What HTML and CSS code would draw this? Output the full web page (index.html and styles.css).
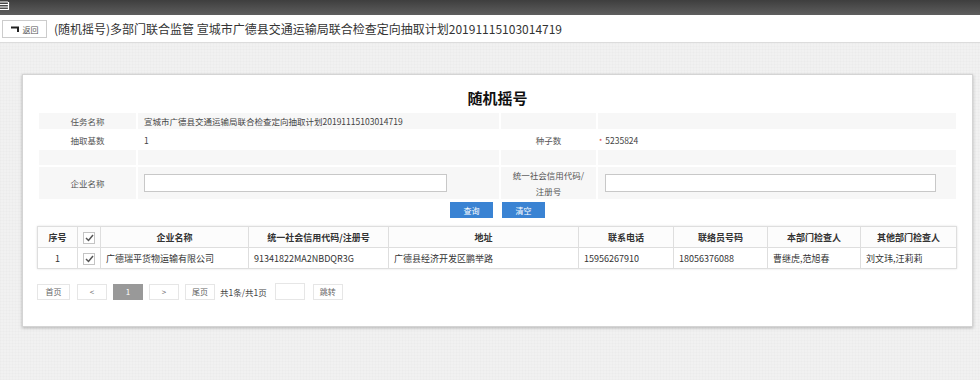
FILE: index.html
```html
<!DOCTYPE html>
<html lang="zh-CN">

<head>
  <meta charset="utf-8">
  <title>随机摇号</title>
  <link rel="stylesheet" href="styles.css">
</head>

<body>
  <div class="topbar">
    <svg class="app-icon" width="11" height="10" viewBox="0 0 11 10">
      <path d="M0 1 H8 M0 3.5 H9 M0 6 H9 M0 8.5 H9 M8.5 1 V9" stroke="#fff" stroke-width="1.2" fill="none"/>
    </svg>
  </div>

  <div class="page-head">
    <button class="back-btn">
      <svg width="9" height="6" viewBox="0 0 9 6">
        <path d="M0 1.5 H7 V6" stroke="#222" stroke-width="2" fill="none"/>
      </svg>
      返回
    </button>
    <span class="page-title">(随机摇号)多部门联合监管 宣城市广德县交通运输局联合检查定向抽取计划20191115103014719</span>
  </div>

  <div class="wrap">
    <div class="card">
      <h1>随机摇号</h1>

      <table class="form-table">
        <colgroup>
          <col style="width:97px">
          <col style="width:361px">
          <col style="width:95px">
          <col>
        </colgroup>
        <tr class="row-a">
          <td class="lbl">任务名称</td>
          <td class="val">宣城市广德县交通运输局联合检查定向抽取计划20191115103014719</td>
          <td></td>
          <td></td>
        </tr>
        <tr class="row-b">
          <td class="lbl">抽取基数</td>
          <td class="val">1</td>
          <td class="lbl">种子数</td>
          <td class="val"><span class="req">*</span>5235824</td>
        </tr>
        <tr class="row-c">
          <td></td>
          <td></td>
          <td></td>
          <td></td>
        </tr>
        <tr class="row-d">
          <td class="lbl">企业名称</td>
          <td class="val"><input type="text" class="txt txt-name"></td>
          <td class="lbl wrap-lbl">统一社会信用代码/注册号</td>
          <td class="val"><input type="text" class="txt txt-code"></td>
        </tr>
      </table>

      <div class="actions">
        <button class="btn-blue">查询</button>
        <button class="btn-blue">清空</button>
      </div>

      <table class="grid">
        <colgroup>
          <col style="width:40px">
          <col style="width:23px">
          <col style="width:148px">
          <col style="width:140px">
          <col style="width:190px">
          <col style="width:95px">
          <col style="width:94px">
          <col style="width:93px">
          <col>
        </colgroup>
        <thead>
          <tr>
            <th>序号</th>
            <th><span class="chk"><svg width="9" height="8" viewBox="0 0 9 8"><path d="M1 4 L3.5 6.5 L8 1" stroke="#555" stroke-width="1.5" fill="none"/></svg></span></th>
            <th>企业名称</th>
            <th>统一社会信用代码/注册号</th>
            <th>地址</th>
            <th>联系电话</th>
            <th>联络员号码</th>
            <th>本部门检查人</th>
            <th>其他部门检查人</th>
          </tr>
        </thead>
        <tbody>
          <tr>
            <td class="center">1</td>
            <td class="center"><span class="chk"><svg width="9" height="8" viewBox="0 0 9 8"><path d="M1 4 L3.5 6.5 L8 1" stroke="#555" stroke-width="1.5" fill="none"/></svg></span></td>
            <td>广德瑞平货物运输有限公司</td>
            <td>91341822MA2NBDQR3G</td>
            <td>广德县经济开发区鹏举路</td>
            <td>15956267910</td>
            <td>18056376088</td>
            <td>曹继虎,范旭春</td>
            <td>刘文玮,汪莉莉</td>
          </tr>
        </tbody>
      </table>

      <div class="pager">
        <span class="pg pg-wide">首页</span>
        <span class="pg">&lt;</span>
        <span class="pg active">1</span>
        <span class="pg">&gt;</span>
        <span class="pg">尾页</span>
        <span class="pg-info">共1条/共1页</span>
        <input type="text" class="pg-input">
        <span class="pg">跳转</span>
      </div>
    </div>
  </div>
</body>

</html>
```

FILE: styles.css
```css
body {
  margin: 0;
  font-family: "Noto Sans CJK SC", "Liberation Sans", sans-serif;
  background-color: #f1f1f1;
  background-image:
    repeating-linear-gradient(0deg, rgba(0,0,0,0.012) 0 1px, transparent 1px 3px),
    repeating-linear-gradient(90deg, rgba(0,0,0,0.012) 0 1px, transparent 1px 3px);
  color: #333;
  height: 380px;
  overflow: hidden;
}

/* dark strip on top */
.topbar {
  height: 15px;
  background: linear-gradient(#3e3e3e, #5e5e5e);
}

.app-icon {
  display: block;
  padding-top: 1px;
}

.page-head {
  height: 27px;
  background: #fff;
  border-bottom: 1px solid #dcdcdc;
  display: flex;
  align-items: center;
  padding-left: 2px;
}

.back-btn {
  height: 18px;
  width: 45px;
  border: 1px solid #ccc;
  background: #fff;
  font-family: inherit;
  font-size: 8px;
  color: #555;
  padding: 0;
  display: flex;
  align-items: center;
  justify-content: center;
  gap: 3px;
  margin-top: 1px;
}

.page-title {
  margin-left: 7px;
  font-size: 12px;
  color: #333;
}

.wrap {
  padding: 31px 7px 0 22px;
}

.card {
  background: #fff;
  border: 1px solid #d4d4d4;
  box-shadow: 0 1px 3px rgba(0,0,0,0.25);
  padding: 13px 14px 27px 14px;
  height: 211px;
}

h1 {
  margin: 0 0 5px 0;
  text-align: center;
  font-size: 15px;
  line-height: 20px;
  font-weight: bold;
  color: #111;
}

/* top form */
.form-table {
  width: 100%;
  table-layout: fixed;
  border-collapse: separate;
  border-spacing: 2px;
  margin: -2px 0 0 0;
  font-size: 8.5px;
  color: #444;
}

.form-table td {
  padding: 0;
}

.form-table .lbl {
  text-align: center;
  color: #555;
}

.form-table .val {
  padding-left: 6px;
}

.row-a td,
.row-c td,
.row-d td {
  background: #f7f7f7;
}

.row-a td { height: 16px; }
.row-b td { height: 17px; }
.row-c td { height: 15px; }
.row-d td { height: 32px; }

.wrap-lbl {
  padding: 0 8px !important;
  line-height: 16px;
}

.req {
  color: #d33;
  font-size: 7px;
  margin-right: 3px;
  margin-left: -5px;
}

.txt {
  height: 18px;
  box-sizing: border-box;
  border: 1px solid #c8c8c8;
  background: #fff;
  display: block;
}

.txt-name { width: 303px; }
.txt-code { width: 331px; margin-left: 1px; }

.actions {
  display: flex;
  justify-content: center;
  gap: 9px;
  margin-top: 1px;
}

.btn-blue {
  width: 43px;
  height: 16px;
  border: none;
  background: #3a83d3;
  color: #fff;
  font-family: inherit;
  font-size: 8px;
  padding: 0;
}

/* results grid */
.grid {
  width: 920px;
  table-layout: fixed;
  border-collapse: collapse;
  margin-top: 8px;
  font-size: 9px;
  box-shadow: 0 0 2px rgba(0,0,0,0.12);
}

.grid th,
.grid td {
  border: 1px solid #dedede;
  height: 20px;
  padding: 0 0 0 5px;
  white-space: nowrap;
  overflow: hidden;
}

.grid th {
  font-weight: bold;
  text-align: center;
  padding: 0;
  background: #fcfcfc;
  color: #333;
}

.grid td {
  color: #333;
}

.grid .center {
  text-align: center;
  padding: 0;
}

.chk {
  display: inline-flex;
  align-items: center;
  justify-content: center;
  width: 10px;
  height: 10px;
  border: 1px solid #c4c4c4;
  background: #fff;
  vertical-align: middle;
}

/* pager */
.pager {
  display: flex;
  align-items: center;
  margin-top: 14px;
  font-size: 8px;
  color: #666;
}

.pg {
  height: 16px;
  min-width: 30px;
  padding: 0 2px;
  box-sizing: border-box;
  border: 1px solid #e6e6e6;
  display: flex;
  align-items: center;
  justify-content: center;
  margin-right: 6px;
  background: #fff;
}

.pg-wide {
  min-width: 33px;
  margin-right: 7px;
}

.pg.active {
  background: #999;
  border-color: #999;
  color: #fff;
}

.pg-info {
  margin: 0 8px 0 -1px;
  color: #444;
  font-size: 8.5px;
}

.pg-input {
  width: 30px;
  height: 17px;
  box-sizing: border-box;
  border: 1px solid #e6e6e6;
  margin-right: 8px;
}
```
